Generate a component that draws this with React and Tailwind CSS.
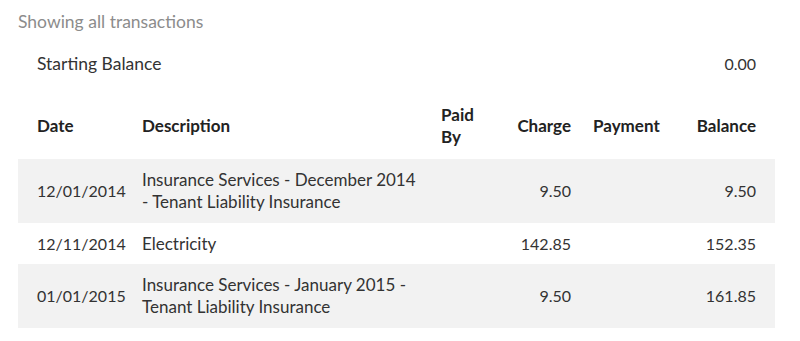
import React from "react";

const rows = [
  { date: "12/01/2014", desc: ["Insurance Services - December 2014", "- Tenant Liability Insurance"], charge: "9.50", balance: "9.50", gray: true, py: "py-[10px]" },
  { date: "12/11/2014", desc: ["Electricity"], charge: "142.85", balance: "152.35", gray: false, py: "py-[9.5px]" },
  { date: "01/01/2015", desc: ["Insurance Services - January 2015 -", "Tenant Liability Insurance"], charge: "9.50", balance: "161.85", gray: true, py: "py-[10px]" },
];

const grid = "grid grid-cols-[105px_299px_60px_70px_109px_76px] items-center px-[19px]";

export default function App() {
  return (
    <div className="w-[800px] h-[341px] bg-white text-[17px] leading-[22px] text-[#333333]" style={{ fontFamily: "Lato, 'Open Sans', sans-serif" }}>
      <div className="ml-[18px] w-[757px] pt-[11px]">
        <div className="text-[#8c8c8c] text-[17.5px]">Showing all transactions</div>
        <div className="mt-[20px] flex justify-between px-[19px]">
          <span className="text-[17.5px]">Starting Balance</span>
          <span className="text-[16px]">0.00</span>
        </div>
        <div className={`${grid} mt-[29px] pb-[11px] font-bold text-[#222222]`}>
          <div>Date</div>
          <div>Description</div>
          <div>Paid<br />By</div>
          <div className="text-right">Charge</div>
          <div className="pl-[22px]">Payment</div>
          <div className="text-right">Balance</div>
        </div>
        {rows.map((r, i) => (
          <div key={i} className={`${grid} ${r.py} ${r.gray ? "bg-[#f2f2f2]" : "bg-white"}`}>
            <div className="text-[16px]">{r.date}</div>
            <div>
              {r.desc.map((l, j) => (
                <div key={j}>{l}</div>
              ))}
            </div>
            <div></div>
            <div className="text-right text-[16px]">{r.charge}</div>
            <div></div>
            <div className="text-right text-[16px]">{r.balance}</div>
          </div>
        ))}
      </div>
    </div>
  );
}
